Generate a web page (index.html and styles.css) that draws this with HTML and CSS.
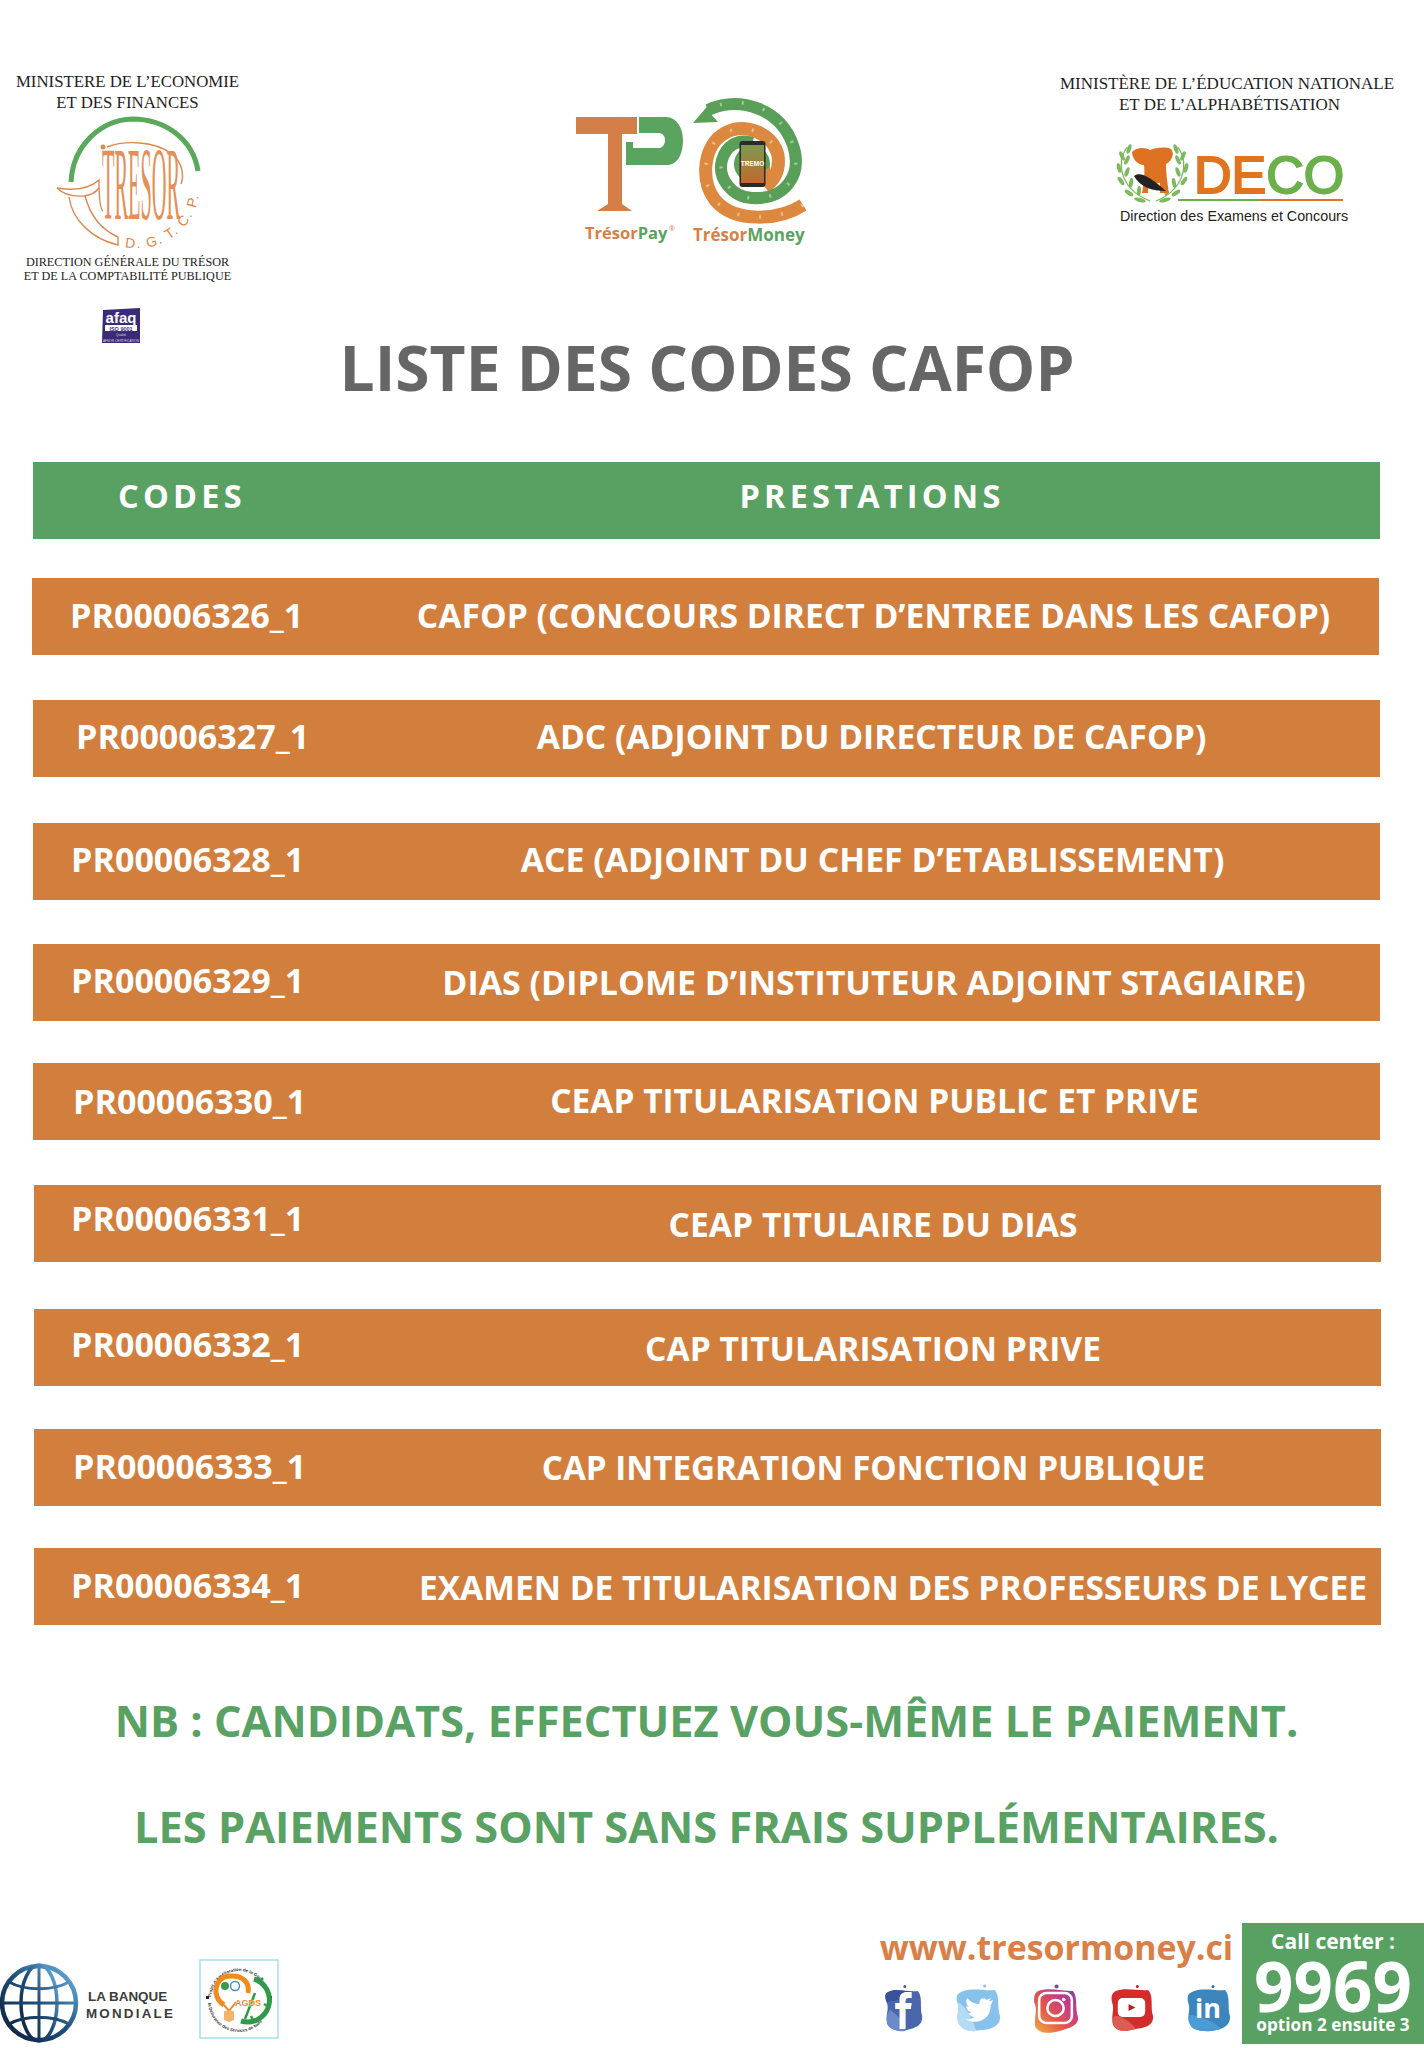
FILE: index.html
```html
<!DOCTYPE html>
<html lang="fr">
<head>
<meta charset="utf-8">
<title>Liste des codes CAFOP</title>
<link rel="stylesheet" href="styles.css">
</head>
<body>
<main class="page">
  <header class="top">
    <section class="org org-left">
      <p class="ministry ministry-left">MINISTERE DE L’ECONOMIE<br>ET DES FINANCES</p>
      <svg class="logo-tresor" viewBox="50 112 160 135" aria-hidden="true">
        <path d="M71 181C73 143 102 119 132 118C165 118 193 138 198 170" fill="none" stroke="#5aa95a" stroke-width="5"/>
        <circle cx="103" cy="146" r="2.500" fill="#e0884c"/>
        <g fill="none" stroke="#e0884c" stroke-width="1.400">
          <path d="M57 187C75 190 90 187 99 179C99 196 100 208 103 210"/>
          <path d="M57 187C63 193 71 196 84 195C92 194 96 191 99 187"/>
          <path d="M69 196C72 219 92 238 118 244L118 236C100 228 90 214 85 195"/>
          <path d="M107 146C125 139 155 140 172 153C183 162 184 175 181 183"/>
        </g>
        <g class="tresor-word" transform="translate(102 218) scale(.37 1.900)"><text x="0" y="0">TRESOR</text></g>
        <path id="dgtcp-arc" d="M125 246A62 62 0 0 0 198 172" fill="none"/>
        <text class="tresor-dgtcp"><textPath href="#dgtcp-arc">D. G. T. C. P.</textPath></text>
      </svg>
      <p class="direction">DIRECTION GÉNÉRALE DU TRÉSOR<br>ET DE LA COMPTABILITÉ PUBLIQUE</p>
      <svg class="logo-afaq" viewBox="0 0 38 36" aria-hidden="true">
        <path d="M1 2L38 0V35H0Z" fill="#3b2a78"/>
        <text class="afaq-word" x="19" y="15">afaq</text>
        <rect x="3" y="17" width="32" height="6" fill="#fff"/>
        <text class="afaq-iso" x="19" y="22.500">ISO 9001</text>
        <text class="afaq-small" x="19" y="28">Qualité</text>
        <text class="afaq-small" x="19" y="33.500">AFNOR CERTIFICATION</text>
      </svg>
    </section>

    <svg class="logo-center" viewBox="570 90 250 165" aria-hidden="true">
      <path d="M576 117H637V134H622V204L632 211H597L608 204V134H576Z" fill="#d47f47"/>
      <path d="M639 117H667C677 118 683 128 683 140C683 155 677 165 667 165H626V142H633V148H660C663 147 665 144 665 140C665 136 663 134 660 133H639Z" fill="#5aa460"/>
      <text class="tp-label" x="585" y="239"><tspan class="c-orange">Trésor</tspan><tspan class="c-green">Pay</tspan></text>
      <text class="tp-reg" x="669" y="231">®</text>

      <path class="spiral-o" d="M803 205C780 220 735 224 715 200C700 180 703 145 725 133C745 122 772 133 778 155C780 170 775 180 765 187"/>
      <path class="spiral-g" d="M708 110C740 96 780 108 793 145C803 175 785 200 752 198C732 197 717 178 722 160C726 146 738 138 752 143"/>
      <path d="M693 123L711 102L709 112L718 122Z" fill="#5a9f58"/>
      <path class="spiral-dots" d="M803 205C780 220 735 224 715 200C700 180 703 145 725 133C745 122 772 133 778 155"/>
      <path class="spiral-dots" d="M720 105C745 97 780 108 793 145C803 175 785 200 752 198C732 197 717 178 722 160"/>
      <circle cx="752" cy="164" r="18" fill="#5a9f58"/>
      <path d="M770 166L758 177L772 180Z" fill="#dc883f"/>
      <rect x="739.500" y="141" width="26" height="46" rx="3" fill="#2a2a2a"/>
      <defs><linearGradient id="phone" x1="0" y1="0" x2="0" y2="1"><stop offset="0" stop-color="#7d9a4e"/><stop offset="1" stop-color="#c4682d"/></linearGradient></defs>
      <rect x="741" y="145" width="23" height="38" fill="url(#phone)"/>
      <text class="phone-label" x="752.500" y="166">TREMO</text>
      <text class="tp-label tm-label" x="693" y="241"><tspan class="c-orange">Trésor</tspan><tspan class="c-green">Money</tspan></text>
    </svg>

    <section class="org org-right">
      <p class="ministry ministry-right">MINISTÈRE DE L’ÉDUCATION NATIONALE<br><span class="line-shift">ET DE L’ALPHABÉTISATION</span></p>
      <svg class="logo-deco" viewBox="1115 143 235 82" aria-hidden="true">
        <g fill="none" stroke="#76b85a" stroke-width="1.200">
          <path d="M1127 147C1115 165 1122 190 1150 201"/>
          <path d="M1178 147C1190 165 1183 190 1156 201"/>
        </g>
        <g fill="#7dba5f">
          <ellipse cx="1129" cy="149" rx="2" ry="5" transform="rotate(20 1129 149)"/>
          <ellipse cx="1122" cy="156" rx="2" ry="5" transform="rotate(-25 1122 156)"/>
          <ellipse cx="1127" cy="160" rx="2" ry="5" transform="rotate(25 1127 160)"/>
          <ellipse cx="1119" cy="168" rx="2" ry="5" transform="rotate(-15 1119 168)"/>
          <ellipse cx="1127" cy="172" rx="2" ry="5" transform="rotate(20 1127 172)"/>
          <ellipse cx="1121" cy="181" rx="2" ry="5" transform="rotate(-35 1121 181)"/>
          <ellipse cx="1131" cy="183" rx="2" ry="5" transform="rotate(10 1131 183)"/>
          <ellipse cx="1129" cy="193" rx="2" ry="5" transform="rotate(-55 1129 193)"/>
          <ellipse cx="1139" cy="191" rx="2" ry="5" transform="rotate(5 1139 191)"/>
          <ellipse cx="1140" cy="200" rx="2" ry="6" transform="rotate(-75 1140 200)"/>
          <ellipse cx="1176" cy="149" rx="2" ry="5" transform="rotate(-20 1176 149)"/>
          <ellipse cx="1183" cy="156" rx="2" ry="5" transform="rotate(25 1183 156)"/>
          <ellipse cx="1178" cy="160" rx="2" ry="5" transform="rotate(-25 1178 160)"/>
          <ellipse cx="1186" cy="168" rx="2" ry="5" transform="rotate(15 1186 168)"/>
          <ellipse cx="1178" cy="172" rx="2" ry="5" transform="rotate(-20 1178 172)"/>
          <ellipse cx="1184" cy="181" rx="2" ry="5" transform="rotate(35 1184 181)"/>
          <ellipse cx="1174" cy="183" rx="2" ry="5" transform="rotate(-10 1174 183)"/>
          <ellipse cx="1176" cy="193" rx="2" ry="5" transform="rotate(55 1176 193)"/>
          <ellipse cx="1166" cy="191" rx="2" ry="5" transform="rotate(-5 1166 191)"/>
          <ellipse cx="1165" cy="200" rx="2" ry="6" transform="rotate(75 1165 200)"/>
        </g>
        <path d="M1132 152C1136 147 1146 147 1150 150C1155 148 1165 146 1171 149C1175 153 1172 161 1166 164C1166 172 1167 182 1169 193H1160V183H1148V193H1142C1144 183 1145 172 1144 165C1137 165 1132 158 1132 152Z" fill="#de7222"/>
        <path d="M1134 176C1140 171 1150 177 1166 191C1152 191 1140 187 1134 176Z" fill="#222"/>
        <text class="deco-word" x="1194" y="193"><tspan class="c-deco-o">DE</tspan><tspan class="c-deco-g">CO</tspan></text>
        <rect x="1178" y="199" width="82" height="2" fill="#6cb04c"/>
        <rect x="1260" y="199" width="83" height="2" fill="#e0741f"/>
        <text class="deco-sub" x="1234" y="221">Direction des Examens et Concours</text>
      </svg>
    </section>
  </header>

  <h1 class="title">LISTE DES CODES CAFOP</h1>

  <div class="table">
    <div class="row head"><span class="code">CODES</span><span class="label">PRESTATIONS</span></div>
    <div class="row"><span class="code">PR00006326_1</span><span class="label">CAFOP (CONCOURS DIRECT D’ENTREE DANS LES CAFOP)</span></div>
    <div class="row"><span class="code">PR00006327_1</span><span class="label">ADC (ADJOINT DU DIRECTEUR DE CAFOP)</span></div>
    <div class="row"><span class="code">PR00006328_1</span><span class="label">ACE (ADJOINT DU CHEF D’ETABLISSEMENT)</span></div>
    <div class="row"><span class="code">PR00006329_1</span><span class="label">DIAS (DIPLOME D’INSTITUTEUR ADJOINT STAGIAIRE)</span></div>
    <div class="row"><span class="code">PR00006330_1</span><span class="label">CEAP TITULARISATION PUBLIC ET PRIVE</span></div>
    <div class="row"><span class="code">PR00006331_1</span><span class="label">CEAP TITULAIRE DU DIAS</span></div>
    <div class="row"><span class="code">PR00006332_1</span><span class="label">CAP TITULARISATION PRIVE</span></div>
    <div class="row"><span class="code">PR00006333_1</span><span class="label">CAP INTEGRATION FONCTION PUBLIQUE</span></div>
    <div class="row"><span class="code">PR00006334_1</span><span class="label">EXAMEN DE TITULARISATION DES PROFESSEURS DE LYCEE</span></div>
  </div>

  <p class="note note-first">NB : CANDIDATS, EFFECTUEZ VOUS-MÊME LE PAIEMENT.</p>
  <p class="note note-second">LES PAIEMENTS SONT SANS FRAIS SUPPLÉMENTAIRES.</p>

  <footer class="bottom">
    <div class="partners">
      <svg class="logo-wb" viewBox="0 0 180 86" aria-hidden="true">
        <defs><linearGradient id="wb" x1="0" y1="1" x2="1" y2="0"><stop offset="0" stop-color="#0c1c38"/><stop offset=".5" stop-color="#1e4e78"/><stop offset="1" stop-color="#6cb8ea"/></linearGradient></defs>
        <g fill="none" stroke="url(#wb)">
          <circle cx="39" cy="41" r="37" stroke-width="4.500"/>
          <ellipse cx="39" cy="41" rx="18" ry="38" stroke-width="3.500"/>
          <path d="M2 41H76M9 20C25 29 53 29 69 20M9 62C25 53 53 53 69 62M39 3V79" stroke-width="3"/>
        </g>
        <text class="wb-text" x="88" y="39">LA BANQUE</text>
        <text class="wb-text wb-second" x="86" y="56">MONDIALE</text>
      </svg>
      <svg class="logo-agds" viewBox="0 0 80 80" aria-hidden="true">
        <rect x="1" y="1" width="78" height="78" fill="#fff" stroke="#a6dcf2" stroke-width="1.500"/>
        <path id="agds-arc" d="M12 40A28 28 0 0 1 68 40" fill="none"/>
        <text class="agds-ring"><textPath href="#agds-arc" startOffset="2%">Projet d’Amélioration de la Gouvernance</textPath></text>
        <path id="agds-arc2" d="M9 42A31 31 0 0 0 71 42" fill="none"/>
        <text class="agds-ring"><textPath href="#agds-arc2" startOffset="2%">la Délivrance des Services de base</textPath></text>
        <rect x="7" y="37" width="3" height="3" fill="#222"/>
        <rect x="70" y="37" width="3" height="3" fill="#222"/>
        <path d="M25 46C12 38 15 18 31 17C44 16 51 24 49 34" fill="none" stroke="#f08a1d" stroke-width="5"/>
        <path d="M25 46L30 52L37 43" fill="none" stroke="#f08a1d" stroke-width="2"/>
        <path d="M25 52H35V61L30 63L25 61Z" fill="#f3b26e"/>
        <circle cx="26" cy="27" r="4" fill="#3a9a4a"/>
        <circle cx="36" cy="27" r="4.500" fill="none" stroke="#3f8fd0" stroke-width="1.500"/>
        <path d="M55 20A20 20 0 0 1 42 62" fill="none" stroke="#2f9a4a" stroke-width="5"/>
        <path d="M59 24L64 19M65 45L70 48M52 57L55 63M56 34L46 60" stroke="#2f9a4a" stroke-width="2.500"/>
        <text class="agds-word" x="36" y="47">AGDS</text>
      </svg>
    </div>
    <div class="contact">
      <div class="web">
        <a class="url">www.tresormoney.ci</a>
        <div class="social">
          <svg class="blob blob-f" viewBox="0 0 46 50" preserveAspectRatio="none" aria-hidden="true">
            <path d="M6 8C14 4 28 8 40 7C46 12 42 24 45 32C46 42 36 44 28 46C18 48 8 46 5 40C2 30 8 26 4 18C2 12 2 10 6 8Z" fill="#4a66ad"/>
            <path d="M6 8C14 4 22 7 30 7C28 16 14 16 4 18C2 12 2 10 6 8Z" fill="#3a5299"/>
            <path d="M5 40C3 32 6 28 8 26C16 30 22 36 26 47C18 48 8 46 5 40Z" fill="#6b8ac9"/>
            <circle cx="25" cy="2.500" r="1.500" fill="#3a5299"/>
            <path d="M19 45V25H14V19H19V15C19 10 23 8 27 8H33V14H29C27 14 26 15 26 17V19H33L32 25H26V45Z" fill="#fff"/>
          </svg>
          <svg class="blob blob-t" viewBox="0 0 46 50" preserveAspectRatio="none" aria-hidden="true">
            <path d="M7 8C16 3 30 7 40 6C45 12 42 22 45 32C46 42 36 46 26 46C16 48 7 46 4 38C2 30 6 26 3 18C2 12 3 10 7 8Z" fill="#86c2ec"/>
            <path d="M4 38C2 30 6 26 3 18C10 20 18 34 22 47C14 48 7 46 4 38Z" fill="#b3dcf4"/>
            <circle cx="30" cy="2" r="1.500" fill="#86c2ec"/>
            <path d="M38 16C36 17 35 17 34 17C35 16 36 15 36 14C35 15 33 15 32 16C29 13 24 15 25 20C20 20 16 18 13 14C11 17 12 21 15 23C14 23 13 22 12 22C12 25 14 28 17 28C16 29 15 29 14 29C15 31 17 33 20 33C17 35 14 36 11 35C21 41 36 37 36 21C37 19 38 18 38 16Z" fill="#fff"/>
          </svg>
          <svg class="blob blob-i" viewBox="0 0 46 50" preserveAspectRatio="none" aria-hidden="true">
            <defs><linearGradient id="ig" x1="0" y1="1" x2="1" y2="0"><stop offset="0" stop-color="#f3b03e"/><stop offset=".4" stop-color="#e2574c"/><stop offset=".75" stop-color="#c0388f"/><stop offset="1" stop-color="#6b4aa8"/></linearGradient></defs>
            <path d="M6 7C15 3 30 7 40 7C45 12 42 24 45 33C46 42 36 44 27 47C17 50 6 50 3 42C2 32 6 26 2 18C2 12 2 10 6 7Z" fill="url(#ig)"/>
            <circle cx="24" cy="2.500" r="2" fill="#7a4aa0"/>
            <rect x="7" y="9" width="32" height="30" rx="7" fill="none" stroke="#fff" stroke-width="2.500"/>
            <circle cx="23" cy="24" r="8" fill="none" stroke="#fff" stroke-width="2.500"/>
            <circle cx="31" cy="15.500" r="1.800" fill="#fff"/>
          </svg>
          <svg class="blob blob-y" viewBox="0 0 46 50" preserveAspectRatio="none" aria-hidden="true">
            <path d="M7 7C16 3 30 7 40 6C46 12 42 24 45 32C46 42 36 44 27 45C17 48 7 48 4 40C2 30 6 26 3 18C2 12 3 9 7 7Z" fill="#d22c2c"/>
            <path d="M4 40C2 32 8 30 14 34C22 38 26 42 27 45C17 48 7 48 4 40Z" fill="#df5a50"/>
            <circle cx="29" cy="2.500" r="1.500" fill="#b02020"/>
            <rect x="9" y="14" width="28" height="19" rx="5" fill="#fff"/>
            <path d="M20 20L27 23.500L20 27Z" fill="#b82020"/>
          </svg>
          <svg class="blob blob-l" viewBox="0 0 46 50" preserveAspectRatio="none" aria-hidden="true">
            <path d="M7 8C16 3 30 7 40 6C46 12 42 24 45 32C46 42 36 46 26 47C16 48 7 46 4 38C2 30 6 26 3 18C2 12 3 10 7 8Z" fill="#3d86bd"/>
            <path d="M4 38C2 30 6 30 10 32C20 34 30 38 36 45C30 47 16 48 9 45C6 43 5 41 4 38Z" fill="#4b9cd3"/>
            <circle cx="28" cy="2.500" r="1.500" fill="#2f6ea3"/>
            <text class="in-glyph" x="23" y="34">in</text>
          </svg>
        </div>
      </div>
      <div class="call">
        <span class="call-top">Call center :</span>
        <span class="call-num">9969</span>
        <span class="call-bottom">option 2 ensuite 3</span>
      </div>
    </div>
  </footer>
</main>
</body>
</html>
```

FILE: styles.css
```css
* { box-sizing: border-box; }
html, body { margin: 0; padding: 0; background: #fff; }
p, h1 { margin: 0; }
.page {
  width: 1424px;
  height: 2048px;
  overflow: hidden;
  font-family: "Open Sans", sans-serif;
  display: flex;
  flex-direction: column;
}
.top {
  display: grid;
  grid-template-columns: 255px 1fr 384px;
  height: 331px;
}
.org { display: flex; flex-direction: column; align-items: center; }
.org-left { padding-top: 71px; }
.org-right { padding-top: 73px; padding-right: 10px; }
.ministry {
  font-family: "Liberation Serif", serif;
  line-height: 21px;
  text-align: center;
  color: #1e1e1e;
  white-space: nowrap;
}
.ministry-left { font-size: 16.800px; }
.ministry-right { font-size: 17px; }
.line-shift { display: inline-block; padding-left: 5px; }
.logo-tresor { width: 160px; height: 135px; margin-left: 5px; }
.tresor-word text {
  font-family: "Liberation Serif", serif;
  font-size: 55px;
  fill: #e38f57;
}
.tresor-dgtcp {
  font-family: "Liberation Sans", sans-serif;
  font-size: 14px;
  letter-spacing: 1.500px;
  fill: #e0884c;
}
.direction {
  font-family: "Liberation Serif", serif;
  font-size: 12.200px;
  line-height: 14px;
  text-align: center;
  color: #222;
  white-space: nowrap;
  margin-top: 7px;
}
.logo-afaq { width: 38px; height: 36px; margin-top: 25px; margin-left: -14px; }
.afaq-word { font-family: "Liberation Sans", sans-serif; font-weight: 700; font-size: 15px; fill: #fff; text-anchor: middle; }
.afaq-iso { font-family: "Liberation Sans", sans-serif; font-weight: 700; font-size: 5.500px; fill: #3b2a78; text-anchor: middle; }
.afaq-small { font-family: "Liberation Sans", sans-serif; font-size: 3.200px; fill: #d9d6ea; text-anchor: middle; }

.logo-center { width: 250px; height: 165px; margin: 90px 0 0 315px; }
.tp-label { font-family: "Open Sans", sans-serif; font-weight: 700; font-size: 16.500px; }
.tm-label { font-size: 17px; }
.tp-reg { font-family: "Open Sans", sans-serif; font-size: 7px; fill: #d47f47; }
.c-orange { fill: #d87f47; }
.c-green { fill: #5aa460; }
.spiral-o { fill: none; stroke: #dc883f; stroke-width: 13; }
.spiral-g { fill: none; stroke: #5a9f58; stroke-width: 12; }
.spiral-dots { fill: none; stroke: #fff; stroke-opacity: .45; stroke-width: 3.500; stroke-dasharray: 2 20; }
.phone-label { font-family: "Liberation Sans", sans-serif; font-weight: 700; font-size: 6.500px; fill: #fff; text-anchor: middle; }

.logo-deco { width: 235px; height: 82px; margin-top: 28px; margin-left: 11px; }
.deco-word { font-family: "Liberation Sans", sans-serif; font-size: 52px; stroke-width: 2; }
.c-deco-o { fill: #e0741f; stroke: #e0741f; }
.c-deco-g { fill: #6cb04c; stroke: #6cb04c; }
.deco-sub { font-family: "Liberation Sans", sans-serif; font-size: 14.300px; fill: #222; text-anchor: middle; }

.title {
  font-size: 62.300px;
  line-height: 72px;
  font-weight: 700;
  color: #666667;
  text-align: center;
  margin-right: 10px;
}
.table {
  display: flex;
  flex-direction: column;
  margin-top: 59px;
  padding: 0 44px 0 32px;
}
.row {
  height: 77px;
  background: #d27e3d;
  display: grid;
  grid-template-columns: 336px 1fr;
  align-items: center;
  color: #fff;
  font-weight: 700;
  font-size: 33.650px;
  white-space: nowrap;
}
.code { padding-left: 38px; font-size: 34.100px; }
.label { text-align: center; }
.head {
  background: #58a162;
  font-size: 32.500px;
  letter-spacing: 4.200px;
  margin-left: 1px;
  padding-bottom: 10px;
}
.head .code { padding-left: 85px; font-size: 32.500px; }
.head .label { padding-right: 5px; }
.row:nth-child(2) { margin-top: 39px; margin-right: 1px; }
.row:nth-child(3) { margin-top: 45px; margin-left: 1px; }
.row:nth-child(4) { margin-top: 46px; margin-left: 1px; }
.row:nth-child(5) { margin-top: 44px; margin-left: 1px; }
.row:nth-child(6) { margin-top: 42px; margin-left: 1px; }
.row:nth-child(7) { margin-top: 45px; margin-left: 2px; margin-right: -1px; }
.row:nth-child(8) { margin-top: 47px; margin-left: 2px; margin-right: -1px; }
.row:nth-child(9) { margin-top: 43px; margin-left: 2px; margin-right: -1px; }
.row:nth-child(10) { margin-top: 42px; margin-left: 2px; margin-right: -1px; }

.row:nth-child(2) .code, .row:nth-child(2) .label { padding-bottom: 3px; }
.row:nth-child(3) .code { padding-left: 43px; padding-bottom: 6px; }
.row:nth-child(3) .label { padding: 0 6px 6px 0; }
.row:nth-child(4) .code { padding-bottom: 6px; }
.row:nth-child(4) .label { padding: 0 4px 6px 0; font-size: 33.850px; }
.row:nth-child(5) .code { padding-bottom: 6px; }
.row:nth-child(5) .label { padding: 0 1px 2px 0; font-size: 33.950px; }
.row:nth-child(6) .code { padding-left: 40px; padding-bottom: 2px; }
.row:nth-child(6) .label { padding-bottom: 4px; font-size: 33.500px; }
.row:nth-child(7) .code { padding-left: 37px; padding-bottom: 11px; }
.row:nth-child(7) .label { padding-right: 5px; }
.row:nth-child(8) .code { padding-left: 37px; padding-bottom: 8px; }
.row:nth-child(8) .label { padding-right: 5px; }
.row:nth-child(9) .code { padding-left: 39px; padding-bottom: 3px; }
.row:nth-child(9) .label { padding-right: 4px; font-size: 33.200px; }
.row:nth-child(10) .code { padding-left: 37px; padding-bottom: 3px; }
.row:nth-child(10) .label { padding-left: 35px; font-size: 33.550px; }

.note {
  font-weight: 700;
  font-size: 43.350px;
  line-height: 60px;
  color: #5aa164;
  text-align: center;
  margin-right: 11px;
  white-space: nowrap;
}
.note-first { margin-top: 66px; }
.note-second { margin-top: 46px; }

.bottom {
  margin-top: auto;
  display: flex;
  justify-content: space-between;
  align-items: flex-end;
  padding-bottom: 4px;
}
.partners { display: flex; align-items: flex-end; gap: 19px; }
.logo-wb { width: 180px; height: 86px; margin-bottom: -4px; }
.wb-text {
  font-family: "Liberation Sans", sans-serif;
  font-weight: 700;
  font-size: 13.400px;
  fill: #3c3c3c;
}
.wb-second { letter-spacing: 2.200px; }
.logo-agds { width: 80px; height: 80px; margin-bottom: 5px; }
.agds-ring { font-family: "Liberation Sans", sans-serif; font-size: 4.400px; font-weight: 700; fill: #333; }
.agds-word { font-family: "Liberation Sans", sans-serif; font-weight: 700; font-size: 9px; fill: #f08a1d; stroke: #fff; stroke-width: .6; paint-order: stroke; }

.contact { display: flex; gap: 9px; align-items: flex-end; }
.web { display: flex; flex-direction: column; align-items: center; width: 353px; }
.url {
  font-weight: 700;
  font-size: 33.900px;
  line-height: 48px;
  color: #d97f48;
  white-space: nowrap;
}
.social { display: flex; justify-content: space-between; width: 348px; margin: 13px 0 10px 3px; align-self: flex-start; }
.blob { height: 50px; }
.blob-f { width: 40px; }
.blob-t { width: 47px; }
.blob-i { width: 47px; }
.blob-y { width: 45px; }
.blob-l { width: 46px; }
.in-glyph { font-family: "Open Sans", sans-serif; font-weight: 700; font-size: 27px; fill: #fff; text-anchor: middle; }
.call {
  width: 182px;
  height: 121px;
  background: #58a162;
  color: #fff;
  font-weight: 700;
  display: flex;
  flex-direction: column;
  align-items: center;
  white-space: nowrap;
}
.call-top { font-size: 21px; line-height: 30px; margin-top: 3px; }
.call-num { font-size: 69px; line-height: 58px; }
.call-bottom { font-size: 17.200px; line-height: 22px; }
```
